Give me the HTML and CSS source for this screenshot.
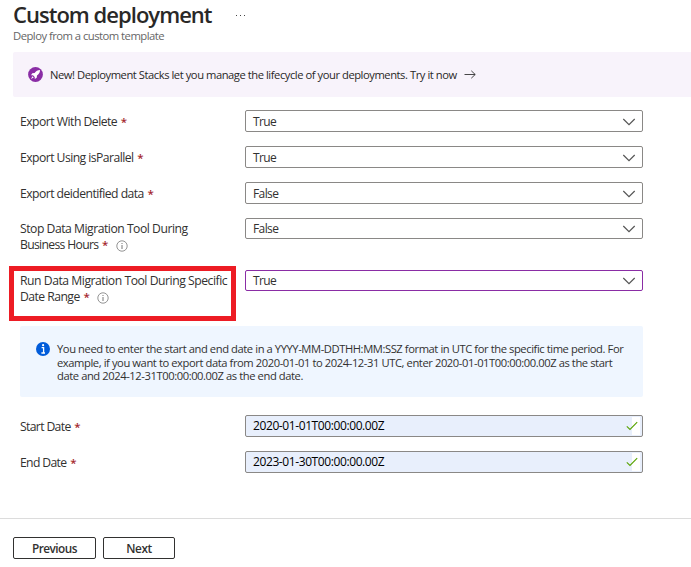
FILE: index.html
```html
<!DOCTYPE html>
<html lang="en">
<head>
<meta charset="utf-8">
<title>Custom deployment</title>
<link rel="stylesheet" href="styles.css">
</head>
<body>
<svg class="defs" width="0" height="0">
  <symbol id="chevron" viewBox="0 0 14 8"><path d="M1.3 1 7 6.7 12.7 1" fill="none" stroke="#555" stroke-width="1.2"/></symbol>
  <symbol id="check" viewBox="0 0 12 10"><path d="M.8 5.3 4 8.4 11.2 1.2" fill="none" stroke="#57a300" stroke-width="1.1"/></symbol>
  <symbol id="hint" viewBox="0 0 12 12"><circle cx="6" cy="6" r="5.2" fill="none" stroke="#666" stroke-width=".7"/><path d="M6 5v4M6 3v1" stroke="#666" stroke-width=".9"/></symbol>
</svg>
<header class="header">
  <div class="title-row"><h1 class="title">Custom deployment</h1><span class="more"><i></i><i></i><i></i></span></div>
  <p class="subtitle">Deploy from a custom template</p>
</header>
<div class="banner">
  <svg class="rocket" viewBox="0 0 15 15"><circle cx="7.5" cy="7.5" r="7.4" fill="#8a2da5"/><path d="M12 3C9.6 3 8 4 6.6 6L4.3 6.3 3 8.2l2 .1 1.7 1.7.1 2 1.9-1.3.3-2.3C11.2 7 12 5.4 12 3ZM4.4 9.3 3 12l2.7-1.4Z" fill="#fff"/></svg>
  <span class="banner-text">New! Deployment Stacks let you manage the lifecycle of your deployments. Try it now</span>
  <svg class="arrow" viewBox="0 0 12 9"><path d="M.5 4.5h10.7M7.3.8 11.2 4.5 7.3 8.2" fill="none" stroke="#333" stroke-width=".9"/></svg>
</div>
<main class="form">
  <div class="row"><label class="label"><span class="t1">Export With Delete</span> <b>*</b></label><div class="field">True<svg class="chev"><use href="#chevron"/></svg></div></div>
  <div class="row"><label class="label"><span class="t2">Export Using isParallel</span> <b>*</b></label><div class="field">True<svg class="chev"><use href="#chevron"/></svg></div></div>
  <div class="row"><label class="label"><span class="t2">Export deidentified data</span> <b>*</b></label><div class="field">False<svg class="chev"><use href="#chevron"/></svg></div></div>
  <div class="row tall"><label class="label"><span class="t4">Stop Data Migration Tool During</span><br><span class="t5">Business Hours</span> <b>*</b><svg class="hint"><use href="#hint"/></svg></label><div class="field short">False<svg class="chev"><use href="#chevron"/></svg></div></div>
  <div class="row last"><label class="label"><span class="t6">Run Data Migration Tool During Specific</span><br><span class="t2">Date Range</span> <b>*</b><svg class="hint"><use href="#hint"/></svg></label><div class="field short active">True<svg class="chev"><use href="#chevron"/></svg></div><div class="highlight"></div></div>
  <div class="info">
    <svg class="info-icon" viewBox="0 0 14 14"><circle cx="7" cy="7" r="7" fill="#015cda"/><path d="M5.6 5.7H7.6V11M5.4 11H9" fill="none" stroke="#fff" stroke-width="1.3"/><circle cx="7.1" cy="3.2" r="1.1" fill="#fff"/></svg>
    <p>You need to enter the start and end date in a YYYY-MM-DDTHH:MM:SSZ format in UTC for the specific time period. For<br>example, if you want to export data from 2020-01-01 to 2024-12-31 UTC, enter 2020-01-01T00:00:00.00Z as the start<br>date and 2024-12-31T00:00:00.00Z as the end date.</p>
  </div>
  <div class="row"><label class="label"><span class="t8">Start Date</span> <b>*</b></label><div class="field filled"><span class="date">2020-01-01T00:00:00.00Z</span><span class="valid"><svg class="check"><use href="#check"/></svg></span></div></div>
  <div class="row"><label class="label"><span class="t8">End Date</span> <b>*</b></label><div class="field filled"><span class="date">2023-01-30T00:00:00.00Z</span><span class="valid"><svg class="check"><use href="#check"/></svg></span></div></div>
</main>
<footer class="footer"><button class="btn previous">Previous</button><button class="btn next">Next</button></footer>
</body>
</html>
```
FILE: styles.css
```css
* { box-sizing: border-box; }
body { margin: 0; width: 691px; height: 567px; overflow: hidden; background: #fff; color: #323130; font: 12.2px/16px "Open Sans", "Noto Sans", sans-serif; letter-spacing: -.5px; white-space: nowrap; display: flex; flex-direction: column; }
svg { display: block; flex: none; }
.defs { position: absolute; }
.header { height: 52px; padding-left: 13px; }
.title-row { display: flex; height: 28px; }
.title { margin: 0; width: 222px; font-size: 22px; line-height: 29px; font-weight: 600; letter-spacing: -.98px; color: #292827; }
.more { display: flex; gap: 3px; padding: 15px 0 0 1px; }
.more i { width: 1px; height: 1px; background: #444; }
.subtitle { margin: 0; font-size: 11.3px; line-height: 15px; color: #666; letter-spacing: -.54px; }
.banner { height: 45px; margin-left: 13px; padding: 1px 0 0 15px; background: #f8f3fb; border-radius: 2px 0 0 2px; display: flex; align-items: center; font-size: 11.2px; letter-spacing: -.45px; color: #292827; }
.rocket { width: 15px; height: 15px; margin: -2px 7px 0 0; }
.banner-text { width: 414px; }
.arrow { width: 12px; height: 9px; margin-top: -2px; }
.form { padding: 13px 48px 0 20px; height: 421px; }
.row { position: relative; display: flex; height: 36px; }
.tall { height: 52px; }
.last { height: 56px; }
.label { width: 225px; padding-top: 4px; }
.tall .label, .last .label { padding-top: 3px; }
.label b { color: #a4262c; font-size: 11.5px; font-weight: 600; margin-left: 1px; }
.t1 { letter-spacing: -.52px; }
.t2 { letter-spacing: -.55px; }
.t4 { letter-spacing: -.49px; }
.t5 { letter-spacing: -.68px; }
.t6 { letter-spacing: -.47px; }
.t8 { letter-spacing: -.65px; }
.hint { display: inline-block; width: 12px; height: 12px; margin-left: 8px; vertical-align: -3px; }
.field { width: 398px; height: 22px; padding: 1px 6px 0 7px; border: 1px solid #8a8886; border-radius: 2px; display: flex; align-items: center; justify-content: space-between; font-size: 12px; letter-spacing: -.6px; }
.short { height: 21px; }
.active { border-color: #8a2da5; }
.chev { width: 14px; height: 8px; }
.highlight { position: absolute; left: -11px; top: -4px; width: 227px; height: 55px; border: 5px solid #ed1c24; }
.info { height: 71px; margin-bottom: 18px; padding: 16px 0 0 16px; background: #eff6ff; border-radius: 2px; display: flex; font-size: 11.2px; line-height: 13.5px; letter-spacing: -.42px; }
.info p { margin: 0; }
.info-icon { width: 14px; height: 14px; margin-right: 7px; }
.filled { background: #e8effc; color: #000; padding: 0 2px 0 7px; letter-spacing: -.4px; }
.valid { height: 18px; width: 14px; display: flex; align-items: center; background: linear-gradient(#fff, #fff) 6px 0 / 8px 18px no-repeat; }
.check { width: 12px; height: 10px; }
.footer { height: 49px; border-top: 1px solid #dcdcdc; padding: 18px 0 0 13px; display: flex; gap: 7px; }
.btn { height: 22px; padding: 0 0 1px; background: #fff; border: 1px solid #323130; border-radius: 2px; color: #323130; font: 600 11.8px/16px "Open Sans", sans-serif; letter-spacing: -.55px; }
.previous { width: 83px; }
.next { width: 72px; letter-spacing: -.4px; }
```
